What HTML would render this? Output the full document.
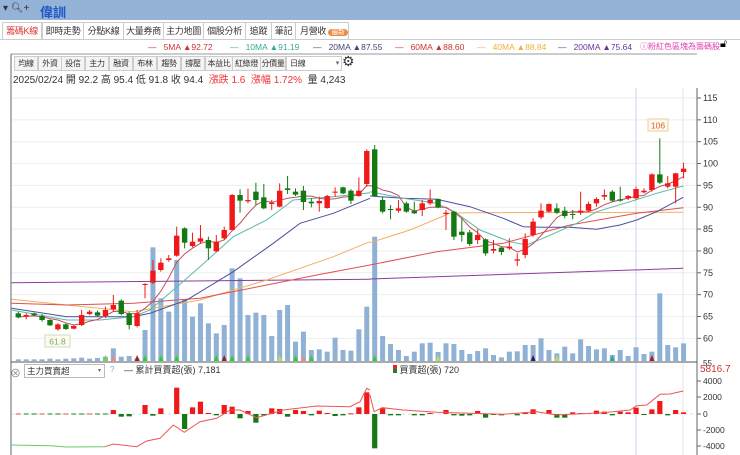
<!DOCTYPE html>
<html><head><meta charset="utf-8"><style>
body{margin:0;width:740px;height:455px;overflow:hidden;background:#fff;font-family:"Liberation Sans","Noto Sans CJK TC",sans-serif;position:relative}
.top{position:absolute;left:0;top:0;width:740px;height:20px;background:#95b3d7}
.abs{position:absolute;white-space:nowrap}
.tab{position:absolute;top:22px;height:16px;border:1px solid #ccc;border-bottom:none;font-size:9px;line-height:16px;text-align:center;color:#333;background:#fff;white-space:nowrap;overflow:hidden;letter-spacing:-0.3px}
.btn{position:absolute;top:56px;height:13px;border:1px solid #ccc;font-size:8px;line-height:13px;text-align:center;color:#333;background:#f4f4f4;white-space:nowrap;overflow:hidden;letter-spacing:-0.3px}
svg{position:absolute;left:0;top:0}
</style></head><body>
<div class="top"></div>
<div class="abs" style="left:3px;top:3px;font-size:10px;color:#333">▾ 🔍︎+</div>
<div class="abs" style="left:40px;top:2px;font-size:13px;font-weight:bold;color:#1f57c8">偉訓</div>
<div class="tab" style="left:2px;width:38px;color:#d33">籌碼K線</div>
<div class="tab" style="left:42px;width:40px">即時走勢</div>
<div class="tab" style="left:83px;width:39px">分點K線</div>
<div class="tab" style="left:123px;width:39px">大量券商</div>
<div class="tab" style="left:163px;width:39px">主力地圖</div>
<div class="tab" style="left:203px;width:41px">個股分析</div>
<div class="tab" style="left:245px;width:25px">追蹤</div>
<div class="tab" style="left:271px;width:23px">筆記</div>
<div class="tab" style="left:295px;text-align:left;padding-left:4px;width:48px">月營收 <span style="background:#f08a3c;color:#fff;border-radius:6px;font-size:7px;padding:0 3px">最新</span></div>
<div class="abs" style="left:0;top:39px;width:740px;height:1px;background:#ccc"></div>
<div class="abs" style="top:42px;left:148px;font-size:8.5px;color:#c33">—&nbsp;&nbsp;&nbsp;5MA ▲92.72</div>
<div class="abs" style="top:42px;left:230px;font-size:8.5px;color:#3a9">—&nbsp;&nbsp;&nbsp;10MA ▲91.19</div>
<div class="abs" style="top:42px;left:313px;font-size:8.5px;color:#447">—&nbsp;&nbsp;&nbsp;20MA ▲87.55</div>
<div class="abs" style="top:42px;left:395px;font-size:8.5px;color:#c33">—&nbsp;&nbsp;&nbsp;60MA ▲88.60</div>
<div class="abs" style="top:42px;left:477px;font-size:8.5px;color:#f0b040">—&nbsp;&nbsp;&nbsp;40MA ▲88.84</div>
<div class="abs" style="top:42px;left:558px;font-size:8.5px;color:#639">—&nbsp;&nbsp;&nbsp;200MA ▲75.64</div>
<div class="abs" style="top:41px;left:640px;font-size:8px;color:#e040b0">ⓘ粉紅色區塊為籌碼股</div>
<div class="abs" style="top:38px;left:720px;font-size:11px">🔓︎</div>
<div class="btn" style="left:14px;width:22px">均線</div>
<div class="btn" style="left:38px;width:22px">外資</div>
<div class="btn" style="left:61px;width:22px">投信</div>
<div class="btn" style="left:85px;width:22px">主力</div>
<div class="btn" style="left:109px;width:22px">融資</div>
<div class="btn" style="left:133px;width:22px">布林</div>
<div class="btn" style="left:157px;width:22px">趨勢</div>
<div class="btn" style="left:181px;width:22px">撐壓</div>
<div class="btn" style="left:205px;width:26px">本益比</div>
<div class="btn" style="left:232px;width:27px">紅綠燈</div>
<div class="btn" style="left:260px;width:24px">分價量</div>
<div class="btn" style="left:286px;background:#fff;text-align:left;padding-left:3px;width:51px">日線<span style="float:right;font-size:7px;color:#666;padding-right:2px">▾</span></div>
<div class="abs" style="left:342px;top:53px;font-size:14px;color:#333">⚙</div>
<div class="abs" style="left:13px;top:71px;font-size:10px;color:#333">2025/02/24 開 92.2 高 95.4 低 91.8 收 94.4 &nbsp;<span style="color:#e33">漲跌 1.6 &nbsp;漲幅 1.72%</span> &nbsp;量 4,243</div>
<div class="abs" style="left:10px;top:365px;font-size:11px;color:#888">⊗</div>
<div class="abs" style="left:24px;top:364px;width:77px;height:12px;border:1px solid #bbb;font-size:8.5px;line-height:12px;padding-left:2px;color:#333">主力買賣超<span style="float:right;font-size:6px;padding-right:3px;color:#666">▾</span></div>
<div class="abs" style="left:110px;top:365px;font-size:8px;color:#7ab">?</div>
<div class="abs" style="left:124px;top:363px;font-size:9px;color:#333">— 累計買賣超(張) 7,181</div>
<div class="abs" style="left:393px;top:363px;font-size:9px;color:#333"><span style="display:inline-block;width:4px;height:8px;background:linear-gradient(#e22 50%,#183 50%)"></span> 買賣超(張) 720</div>
<svg id="s" width="740" height="455"></svg>
<script>
var s='';
function L(x1,y1,x2,y2,c,w,extra){s+='<line x1="'+x1+'" y1="'+y1+'" x2="'+x2+'" y2="'+y2+'" stroke="'+c+'" stroke-width="'+(w||1)+'" '+(extra||'')+'/>';}
function R(x,y,w,h,c){s+='<rect x="'+x+'" y="'+y+'" width="'+w+'" height="'+Math.max(h,1)+'" fill="'+c+'"/>';}
function T(x,y,t,c,fs,a){s+='<text x="'+x+'" y="'+y+'" fill="'+c+'" font-size="'+(fs||9)+'" '+(a||'')+'>'+t+'</text>';}
L(11,54,697,54,'#999');L(11,54,11,455,'#666');L(697,88,697,455,'#666');
var lv=[115,110,105,100,95,90,85,80,75,70,65,60];
lv.forEach(function(p){var y=98+(115-p)*4.37;L(12,y,696,y,'#eee');L(697,y,701,y,'#666');T(703,y+3,p,'#333',9);});
T(703,366,'55','#333',8);
L(636,88,636,455,'#c8d4ec');L(683,88,683,455,'#e4e4e4');
function X(i){return 18.3+7.92*i;}
var vol=[808,808,808,808,806,808,806,805,803,806,804,800,775,800,798,805,720,472,625,665,510,630,680,640,700,730,705,535,565,675,668,675,738,660,645,755,725,780,778,785,743,780,782,718,650,440,738,762,780,798,785,760,758,786,760,762,780,792,783,775,795,802,785,784,765,765,745,780,790,770,790,748,768,778,775,795,780,798,772,792,785,610,765,772,760];
vol.forEach(function(v,i){var y=90+v/3;R(X(i)-2.5,y,5,361-y,'#8fb1d6');});
[[11,'#7c5'],[12,'#e88'],[15,'#922'],[16,'#3c3'],[18,'#3c3'],[20,'#3c3'],[25,'#3c3'],[26,'#922'],[27,'#3c3'],[29,'#3c3'],[33,'#bd5'],[35,'#3c3'],[36,'#e88'],[37,'#3c3'],[45,'#3c3'],[53,'#bd5'],[65,'#226'],[68,'#bd5'],[75,'#2a9'],[80,'#922']].forEach(function(a){var x=X(a[0]);s+='<polygon points="'+(x-2.5)+',361 '+(x+2.5)+',361 '+x+',355" fill="'+a[1]+'"/>';});
L(11,362,697,362,'#555');
function P(pts,c,off){var d=pts.map(function(p){return ((off||0)+p[0]/3).toFixed(1)+','+(90+p[1]/3).toFixed(1);}).join(' ');s+='<polyline points="'+d+'" fill="none" stroke="'+c+'" stroke-width="1"/>';}
P([[35,578],[1110,568]],'#8c3c9c');P([[0,567],[940,535]],'#8c3c9c',370);
P([[35,628],[200,645],[400,665],[600,630],[800,570],[1000,500],[1110,455]],'#f0b060');P([[0,458],[120,420],[240,370],[300,368],[940,367]],'#f0b060',370);
P([[35,640],[200,645],[400,640],[600,625],[800,585],[950,555],[1110,525]],'#e05050');P([[0,525],[200,485],[400,460],[600,405],[800,370],[940,353]],'#e05050',370);
P([[35,655],[200,680],[400,680],[450,670],[560,630],[700,545],[820,460],[900,400],[1000,370],[1110,325]],'#4a4fa0');P([[0,318],[100,325],[200,328],[300,350],[400,385],[460,410],[520,412],[600,412],[680,418],[750,405],[800,390],[860,365],[940,322]],'#4a4fa0',370);
P([[35,660],[200,690],[300,690],[400,680],[450,660],[520,600],[600,530],[700,440],[800,390],[880,330],[1000,320],[1110,308]],'#5bb8a8');P([[0,305],[100,325],[200,340],[260,370],[330,420],[420,455],[470,465],[530,440],[620,400],[680,365],[780,335],[860,310],[940,288]],'#5bb8a8',370);
var C=[['g',670,682,665,685],['r',675,680,670,688],['g',670,676,668,678],['g',678,690,672,695],['g',690,706,688,708],['r',703,718,700,722],['g',703,717,700,720],['r',708,716,705,718],['r',675,705,660,708],['r',665,672,660,676],['g',667,677,662,680],['r',660,678,650,684],['r',645,658,615,665],['g',632,672,628,676],['g',670,705,665,718],['r',670,708,660,712],['r',582,585,580,625],['r',542,578,510,582],['r',518,540,505,545],['r',505,510,495,515],['r',437,497,410,500],['g',415,458,412,475],['r',455,468,428,472],['r',445,455,405,462],['g',450,475,440,510],['r',455,484,435,486],['r',420,445,410,450],['r',315,420,312,422],['g',315,332,298,368],['r',330,334,296,340],['g',305,330,278,345],['g',322,355,282,358],['r',338,342,330,360],['r',302,350,280,352],['g',295,300,258,312],['g',305,314,295,318],['g',302,336,288,360],['g',335,340,325,352],['r',333,340,320,365],['r',318,354,315,356],['r',305,308,292,320],['g',292,310,290,312],['g',302,332,298,342],['r',302,318,262,320],['r',183,282,178,290],
['g',178,318,165,320],['g',330,365,322,370],['g',357,360,345,388],['r',355,362,330,368],['g',340,365,335,368],['g',362,370,335,372],['r',340,360,330,378],['r',330,340,298,345],['g',327,352,325,355],['r',368,372,360,420],['g',365,440,362,450],['g',425,435,385,455],['g',427,462,420,468],['r',435,450,418,462],['g',448,490,445,497],['r',477,482,450,490],['g',473,486,470,495],['r',470,475,445,480],['r',508,512,490,528],['r',447,495,430,505],['r',395,435,385,440],['r',362,382,340,387],['r',342,365,340,368],['g',355,368,340,372],['g',362,378,350,385],['g',372,375,360,388],['r',362,368,305,375],['r',342,362,335,366],['r',327,340,322,350],['r',315,320,298,330],['g',305,332,300,335],['g',328,332,290,335],['r',318,325,315,330],['r',297,325,290,328],['r',302,307,295,310],['r',253,300,250,305],['g',253,278,145,282],['r',280,290,258,295],['r',250,290,248,340],['r',236,246,218,265]];
var cl=C.map(function(c){return 90+(c[0]=='r'?c[1]:c[2])/3;});var m5=[];
for(var i=0;i<cl.length;i++){var a=0,n=0;for(var j=Math.max(0,i-4);j<=i;j++){a+=cl[j];n++;}m5.push(X(i).toFixed(1)+','+(a/n).toFixed(1));}
s+='<polyline points="'+m5.join(' ')+'" fill="none" stroke="#c05060" stroke-width="1"/>';
C.forEach(function(c,i){var x=X(i),col=c[0]=='r'?'#f01818':'#137a13';L(x,90+c[3]/3,x,90+c[4]/3,col);R(x-2.7,90+c[1]/3,5.4,(c[2]-c[1])/3,col);});
s+='<rect x="45" y="335" width="25" height="12" fill="#fbfbee" stroke="#cdb"/>';T(57.5,344.5,'61.8','#7a7',8.5,'text-anchor="middle"');
s+='<rect x="648" y="119" width="20" height="12" fill="#fdf9ee" stroke="#ec9"/>';T(658,128.5,'106','#e06030',8.5,'text-anchor="middle"');
T(700,372,'5816.7','#c33',10);
[[4000,381],[2000,397],[0,414],[-2000,430],[-4000,446]].forEach(function(a){L(697,a[1],701,a[1],'#666');T(703,a[1]+3,a[0],'#333',8.5);});
L(12,414,696,414,'#ddd','1','stroke-dasharray="3,3"');
var B=[[12,165],[13,185],[14,184],[16,150],[17,182],[18,160],[20,98],[21,222],[22,157],[23,140],[24,174],[25,181],[26,150],[27,155],[28,190],[29,168],[30,203],[31,181],[32,160],[33,162],[34,185],[35,165],[36,168],[37,181],[38,167],[39,174],[40,183],[41,181],[42,175],[43,157],[44,112],
[45,280],[46,160],[47,181],[48,181],[50,181],[51,181],[52,174],[54,165],[55,181],[56,182],[57,181],[58,168],[59,188],[60,179],[61,181],[63,181],[64,173],[65,163],[67,165],[68,188],[69,188],[70,172],[71,174],[73,167],[74,170],[75,181],[76,170],[77,172],[78,158],[79,179],[80,163],[81,138],[82,181],[83,165],[84,172]];
for(var k=0;k<12;k++){L(X(k)-2.5,414,X(k)+2.5,414,k%3?'#6a6':'#e88',1.5);}
B.forEach(function(b){var x=X(b[0]),y=355+b[1]/3;if(y<414)R(x-2.6,y,5.2,414-y,'#f01818');else R(x-2.6,414,5.2,y-414,'#137a13');});
function Q(pts,c,off){s+='<polyline points="'+pts.map(function(p){return (off+p[0]/3).toFixed(1)+','+(355+p[1]/3).toFixed(1);}).join(' ')+'" fill="none" stroke="'+c+'" stroke-width="1"/>';}
Q([[35,270],[150,272],[200,276],[315,275]],'#6c6',0);
Q([[315,275],[340,267],[410,275],[440,258],[480,250],[520,210],[553,232],[600,200],[650,190],[690,165],[720,165],[770,188],[850,165],[950,153],[1050,155],[1080,140],[1100,100],[1110,105]],'#e55',0);
Q([[0,120],[12,170],[37,158],[100,165],[200,172],[300,175],[400,178],[500,170],[560,180],[600,178],[700,173],[780,165],[800,152],[830,150],[870,118],[900,117],[940,108]],'#e55',370);
document.getElementById('s').innerHTML=s;
</script>
</body></html>
